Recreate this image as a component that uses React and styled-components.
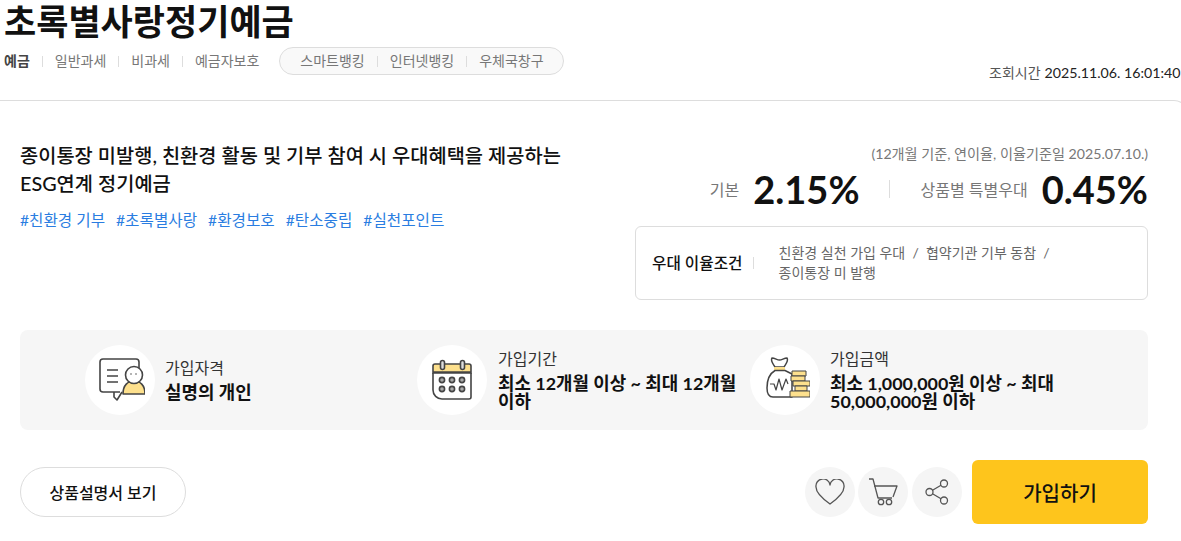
import React from 'react';
import styled, { createGlobalStyle } from 'styled-components';

const GlobalStyle = createGlobalStyle`
  html, body { margin: 0; padding: 0; background: #fff; overflow: hidden; }
  body { font-family: Lato, "Noto Sans CJK KR", sans-serif; color: #111; }
`

const Page = styled.div`
  width: 1181px;
  height: 541px;
  overflow: hidden;
`

const Header = styled.header`
  height: 100px;
  padding-left: 4px;
  position: relative;
`

const Title = styled.h1`
  margin: 0;
  height: 47px;
  font-size: 35px;
  line-height: 43px;
  font-weight: 700;
  color: #111;
`

const NavRow = styled.div`
  display: flex;
  align-items: center;
  height: 28px;
`

const NavGroup = styled.div`
  display: flex;
  align-items: center;
`

const NavItem = styled.span`
  font-size: 14px;
  line-height: 28px;
  color: ${props => props.active ? '#444' : '#777'};
  font-weight: ${props => props.active ? 700 : 400};
  display: flex;
  align-items: center;
  white-space: nowrap;
  &:not(:last-child)::after {
    content: '';
    width: 1px;
    height: 11px;
    background: #ddd;
    margin: 0 12px;
  }
`

const Pill = styled.div`
  display: flex;
  align-items: center;
  height: 28px;
  box-sizing: border-box;
  margin-left: 20px;
  padding: 0 19px 0 20px;
  border: 1px solid #ddd;
  border-radius: 14px;
  background: #f9f9f9;
`

const QueryTime = styled.div`
  position: absolute;
  top: 64px;
  left: 989px;
  font-size: 14px;
  line-height: 18px;
  color: #555;
  white-space: nowrap;
`

const QueryDate = styled.span`
  font-size: 14.2px;
  color: #222;
  margin-left: 4px;
`

// the card runs past the right edge of the window, only its corner shows
const Main = styled.main`
  width: 1188px;
  height: 441px;
  box-sizing: border-box;
  padding: 0 39px 0 20px;
  border-top: 1px solid #ddd;
  border-right: 1px solid #ddd;
  border-radius: 0 14px 0 0;
`

const Summary = styled.section`
  display: flex;
  justify-content: space-between;
  height: 229px;
  padding-top: 40px;
  box-sizing: border-box;
`

const Description = styled.div`
  width: 560px;
`

const Lead = styled.p`
  margin: 0;
  font-size: 19.8px;
  line-height: 28px;
  font-weight: 500;
  color: #111;
  word-break: keep-all;
`

const Tags = styled.div`
  display: flex;
  gap: 11px;
  margin-top: 12px;
`

const Tag = styled.span`
  font-size: 15.65px;
  line-height: 22px;
  color: #2a7de1;
`

const RatePanel = styled.div`
  width: 513px;
  display: flex;
  flex-direction: column;
  align-items: flex-end;
  margin-top: 4px;
`

const RateNote = styled.div`
  font-size: 14.15px;
  line-height: 18px;
  color: #777;
`

const RateRow = styled.div`
  display: flex;
  align-items: center;
  height: 44px;
  margin-top: 4px;
`

const RateLabel = styled.span`
  font-size: 16px;
  color: #777;
  margin-right: 14px;
`

const RateValue = styled.strong`
  font-family: Lato, sans-serif;
  font-size: 38px;
  line-height: 44px;
  font-weight: 700;
  color: #111;
`

const RateDivider = styled.span`
  width: 1px;
  height: 18px;
  background: #ddd;
  margin: 0 31px 0 29px;
`

const ConditionBox = styled.div`
  width: 513px;
  height: 74px;
  box-sizing: border-box;
  margin-top: 15px;
  padding: 0 16px;
  display: flex;
  align-items: center;
  border: 1px solid #ddd;
  border-radius: 6px;
`

const ConditionTitle = styled.span`
  font-size: 15.7px;
  font-weight: 500;
  color: #111;
  padding-right: 10px;
  border-right: 1px solid #ddd;
  line-height: 12px;
  white-space: nowrap;
`

const ConditionText = styled.p`
  margin: 0 0 0 25px;
  width: 300px;
  font-size: 14px;
  line-height: 20px;
  color: #666;
  word-break: keep-all;
`

const InfoBar = styled.section`
  height: 100px;
  background: #f6f6f6;
  border-radius: 8px;
  display: grid;
  grid-template-columns: 397px 333px 1fr;
  align-items: center;
`

const InfoItem = styled.div`
  display: flex;
  align-items: center;
  gap: ${props => props.gap}px;
  padding-left: ${props => props.inset}px;
`

const IconDisc = styled.div`
  width: 70px;
  height: 70px;
  border-radius: 50%;
  background: #fff;
  flex: none;
  display: flex;
  align-items: center;
  justify-content: center;
`

const InfoText = styled.div`
  width: ${props => props.width}px;
  padding-bottom: 2px;
`

const InfoLabel = styled.div`
  font-size: 16px;
  line-height: 20px;
  color: #333;
  margin-bottom: 5px;
`

const InfoValue = styled.div`
  font-size: 17.9px;
  line-height: 18px;
  font-weight: 700;
  color: #111;
  word-break: keep-all;
`

const Actions = styled.div`
  display: flex;
  align-items: center;
  justify-content: space-between;
  margin-top: 30px;
`

const GuideButton = styled.button`
  width: 166px;
  height: 50px;
  padding: 0;
  background: #fff;
  border: 1px solid #ddd;
  border-radius: 25px;
  font-family: inherit;
  font-size: 16px;
  font-weight: 500;
  color: #111;
`

const ActionGroup = styled.div`
  display: flex;
  align-items: center;
  gap: 4px;
`

const RoundButton = styled.button`
  width: 50px;
  height: 50px;
  padding: 0;
  border: none;
  border-radius: 50%;
  background: #f5f5f5;
  display: flex;
  align-items: center;
  justify-content: center;
  &:first-child {
    margin-right: -1px;
  }
`

const JoinButton = styled.button`
  width: 176px;
  height: 64px;
  margin-left: 6px;
  border: none;
  border-radius: 6px;
  background: #fec51c;
  font-family: inherit;
  font-size: 20px;
  font-weight: 500;
  color: #111;
`

const PersonIcon = () => (
  <svg width="50" height="46" viewBox="-3 0 50 46" fill="none" stroke="#444" strokeWidth="1.6" strokeLinejoin="round">
    <path d="M22 35H5a3 3 0 0 1-3-3V5a3 3 0 0 1 3-3h33a3 3 0 0 1 3 3v8" />
    <path d="M16 35v5l3 3 5-8" />
    <path d="M9 13h11M9 19h11M9 25h11" />
    <path d="M25 37c0-9 5-13 11-13s11 4 11 13z" fill="#fde08d" />
    <circle cx="36" cy="18" r="8.5" fill="#fff" />
    <path d="M33 16.500v1M38 16.500v1" />
  </svg>
)

const CalendarIcon = () => (
  <svg width="42" height="42" viewBox="0 0 42 42" fill="none" stroke="#444" strokeWidth="1.6">
    <path d="M2 14V7a2 2 0 0 1 2-2h34a2 2 0 0 1 2 2v7z" fill="#fde08d" />
    <path d="M2 14v17a9 9 0 0 0 9 9h27a2 2 0 0 0 2-2V14" fill="#fff" />
    <path d="M2 13.500h38" strokeWidth="2.4" />
    <rect x="9.500" y="1.500" width="4" height="9" rx="2" fill="#ddd" />
    <rect x="29.500" y="1.500" width="4" height="9" rx="2" fill="#ddd" />
    <g fill="#aaa">
      <circle cx="11" cy="21" r="2.600" /><circle cx="21" cy="21" r="2.600" /><circle cx="31" cy="21" r="2.600" />
      <circle cx="11" cy="30" r="2.600" /><circle cx="21" cy="30" r="2.600" /><circle cx="31" cy="30" r="2.600" />
    </g>
  </svg>
)

const MoneyBagIcon = () => (
  <svg width="50" height="46" viewBox="-6 0 50 46" fill="none" stroke="#444" strokeWidth="1.5" strokeLinejoin="round">
    <path d="M6 1c3 0 5 2 7.500 2S18 1 21 1c2 3-2 7-3 9H9C8 8 4 4 6 1z" fill="#fff" />
    <rect x="8" y="10" width="11" height="3.500" rx="1" fill="#fde08d" stroke="none" />
    <path d="M9 13.500C3 17 1 23 1 31c0 6 2 9 6 9h19V17l-7-3.500z" fill="#fff" />
    <path d="M4 27h4l2 6 3-11 3 11 4-11 2 5" strokeWidth="1.2" />
    <g fill="#fde08d" strokeWidth="1">
      <rect x="26" y="14" width="14" height="5" />
      <rect x="25" y="19" width="14" height="5" />
      <rect x="27" y="24" width="17" height="5" />
      <rect x="29" y="29" width="12" height="5" />
      <rect x="24" y="34" width="20" height="6" />
    </g>
  </svg>
)

const HeartIcon = () => (
  <svg width="30" height="26" viewBox="0 0 30 26" fill="none" stroke="#555" strokeWidth="1.3" strokeLinejoin="round">
    <path d="M15 25C8 20 1 14 1 8a7 7 0 0 1 14-2 7 7 0 0 1 14 2c0 6-7 12-14 17z" />
  </svg>
)

const CartIcon = () => (
  <svg width="30" height="28" viewBox="0 0 30 28" fill="none" stroke="#555" strokeWidth="1.3" strokeLinejoin="round">
    <path d="M1 1h4l5 19h14" />
    <path d="M6 8h23l-4 11" />
    <circle cx="13" cy="24" r="2.700" />
    <circle cx="21" cy="24" r="2.700" />
  </svg>
)

const ShareIcon = () => (
  <svg width="24" height="26" viewBox="0 0 24 26" fill="none" stroke="#555" strokeWidth="1.3">
    <circle cx="4.500" cy="13" r="3.500" />
    <circle cx="19" cy="4.500" r="3.500" />
    <circle cx="19" cy="21.500" r="3.500" />
    <path d="M7.500 11.200l8.500-5M7.500 14.800l8.500 5" />
  </svg>
)

export default function App() {
  return (
    <Page>
      <GlobalStyle />
      <Header>
        <Title>초록별사랑정기예금</Title>
        <NavRow>
          <NavGroup>
            <NavItem active>예금</NavItem>
            <NavItem>일반과세</NavItem>
            <NavItem>비과세</NavItem>
            <NavItem>예금자보호</NavItem>
          </NavGroup>
          <Pill>
            <NavItem>스마트뱅킹</NavItem>
            <NavItem>인터넷뱅킹</NavItem>
            <NavItem>우체국창구</NavItem>
          </Pill>
        </NavRow>
        <QueryTime>조회시간<QueryDate>2025.11.06. 16:01:40</QueryDate></QueryTime>
      </Header>
      <Main>
        <Summary>
          <Description>
            <Lead>종이통장 미발행, 친환경 활동 및 기부 참여 시 우대혜택을 제공하는 ESG연계 정기예금</Lead>
            <Tags>
              <Tag>#친환경 기부</Tag>
              <Tag>#초록별사랑</Tag>
              <Tag>#환경보호</Tag>
              <Tag>#탄소중립</Tag>
              <Tag>#실천포인트</Tag>
            </Tags>
          </Description>
          <RatePanel>
            <RateNote>(12개월 기준, 연이율, 이율기준일 2025.07.10.)</RateNote>
            <RateRow>
              <RateLabel>기본</RateLabel>
              <RateValue>2.15%</RateValue>
              <RateDivider />
              <RateLabel>상품별 특별우대</RateLabel>
              <RateValue>0.45%</RateValue>
            </RateRow>
            <ConditionBox>
              <ConditionTitle>우대 이율조건</ConditionTitle>
              <ConditionText>친환경 실천 가입 우대 &nbsp;/&nbsp; 협약기관 기부 동참 &nbsp;/&nbsp; 종이통장 미 발행</ConditionText>
            </ConditionBox>
          </RatePanel>
        </Summary>
        <InfoBar>
          <InfoItem inset={65} gap={10}>
            <IconDisc><PersonIcon /></IconDisc>
            <InfoText width={200}>
              <InfoLabel>가입자격</InfoLabel>
              <InfoValue>실명의 개인</InfoValue>
            </InfoText>
          </InfoItem>
          <InfoItem inset={0} gap={11}>
            <IconDisc><CalendarIcon /></IconDisc>
            <InfoText width={245}>
              <InfoLabel>가입기간</InfoLabel>
              <InfoValue>최소 12개월 이상 ~ 최대 12개월 이하</InfoValue>
            </InfoText>
          </InfoItem>
          <InfoItem inset={0} gap={10}>
            <IconDisc><MoneyBagIcon /></IconDisc>
            <InfoText width={250}>
              <InfoLabel>가입금액</InfoLabel>
              <InfoValue>최소 1,000,000원 이상 ~ 최대 50,000,000원 이하</InfoValue>
            </InfoText>
          </InfoItem>
        </InfoBar>
        <Actions>
          <GuideButton>상품설명서 보기</GuideButton>
          <ActionGroup>
            <RoundButton><HeartIcon /></RoundButton>
            <RoundButton><CartIcon /></RoundButton>
            <RoundButton><ShareIcon /></RoundButton>
            <JoinButton>가입하기</JoinButton>
          </ActionGroup>
        </Actions>
      </Main>
    </Page>
  )
}
